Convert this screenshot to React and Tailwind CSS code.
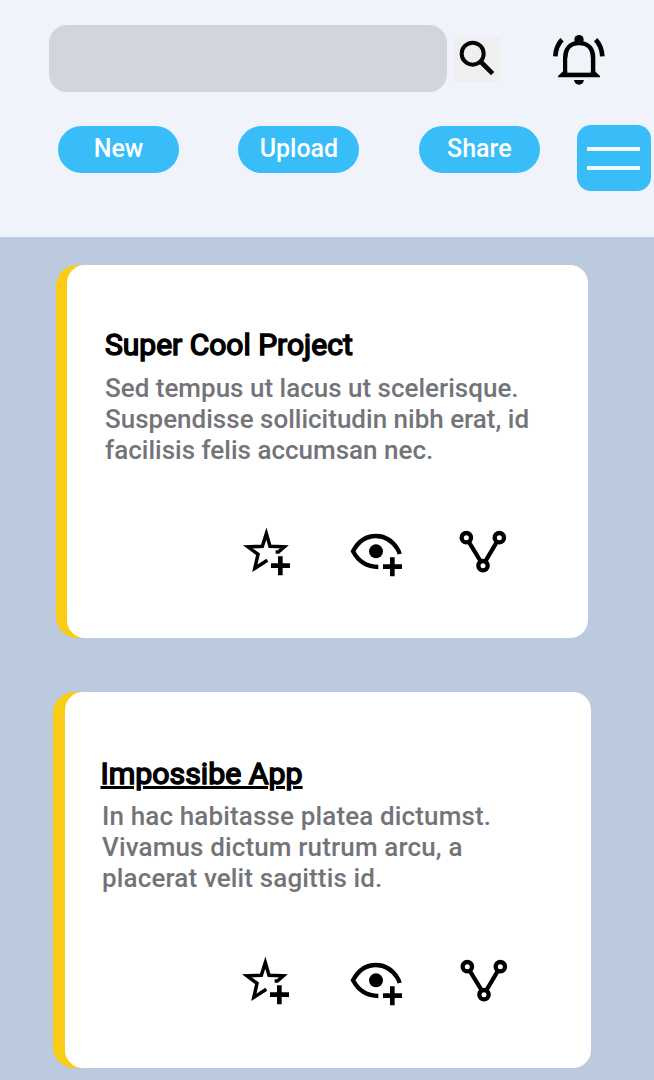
import React from "react";

function SearchIcon() {
  return (
    <svg viewBox="42 66 138 135" className="h-[45px] w-[46px]" fill="none" stroke="#050505" strokeWidth="12">
      <circle cx="98" cy="116" r="33" />
      <path d="M120 138L158 176" strokeWidth="14" />
    </svg>
  );
}

function BellIcon() {
  return (
    <svg viewBox="333 54 168 162" className="h-[54px] w-[56px]" fill="none" stroke="#000" strokeWidth="14">
      <path d="M376 178V128C376 101 391 84 417 84C443 84 459 101 459 128V178" />
      <path d="M354 187V183L370 168H464L480 183V187Z" fill="#000" stroke="none" />
      <path d="M382 173V128H452V173Z" fill="#f0f4fa" stroke="none" />
      <circle cx="417" cy="74" r="14" fill="#000" stroke="none" />
      <path d="M402 195H432C430 204 425 209 417 209C409 209 404 204 402 195Z" fill="#000" stroke="none" />
      <path d="M346 124C347 103 353 88 366 74M487 124C486 103 480 88 467 74" strokeWidth="14" />
    </svg>
  );
}

function StarPlusIcon() {
  return (
    <svg viewBox="36 36 150 150" className="size-[50px]" fill="none" stroke="#000" strokeWidth="10.5" strokeMiterlimit="10">
      <path d="M137 111H145L163 95.500L120 94L109 56L97 94L54 95.500L84 118L74.500 160L112 136" />
      <path d="M123 152H180M151 124V181" strokeWidth="14" />
    </svg>
  );
}

function EyePlusIcon() {
  return (
    <svg viewBox="354 42 168 150" className="h-[50px] w-[56px]" fill="none" stroke="#000" strokeWidth="13">
      <path d="M509 117Q507 108 502 101C485 75 462 63 438 63C408 63 384 80 369 109C385 139 408 156 445 156" />
      <circle cx="438" cy="109" r="21" fill="#000" stroke="none" />
      <path d="M459 155H516M487 127V184" strokeWidth="14" />
    </svg>
  );
}

function ForkIcon() {
  return (
    <svg viewBox="684 36 150 150" className="size-[50px]" fill="none" stroke="#000" strokeWidth="13">
      <circle cx="709" cy="68" r="14" />
      <circle cx="808" cy="68" r="14" />
      <circle cx="759" cy="152" r="14" />
      <path d="M716 80L752 139M801 80L766 139" strokeWidth="12.5" />
    </svg>
  );
}

function PillButton({ children }) {
  return (
    <button className="h-[47px] w-[121px] rounded-full bg-[#38bdf9] text-center text-[25px] leading-[46px] font-medium text-white">
      {children}
    </button>
  );
}

function Header() {
  return (
    <header className="h-[237px] bg-[#f0f4fa] pt-[25px]">
      <div className="flex h-[67px] items-start pl-[49px]">
        <div className="h-[67px] w-[398px] rounded-[18px] bg-[#d1d5de]" />
        <button className="mt-[12px] ml-[7px] bg-[#efefef]"><SearchIcon /></button>
        <button className="mt-[8px] ml-[51px]"><BellIcon /></button>
      </div>
      <div className="mt-[33px] flex items-start pl-[58px]">
        <div className="mt-[0.5px] flex gap-[59.4px]">
          <PillButton>New</PillButton>
          <PillButton>Upload</PillButton>
          <PillButton>Share</PillButton>
        </div>
        <button className="ml-[37px] flex h-[66px] w-[74px] flex-col items-center gap-[15px] rounded-[14px] bg-[#38bdf9] pt-[22px]">
          <span className="h-[4px] w-[53px] bg-[#f0f7fe]" />
          <span className="h-[4px] w-[53px] bg-[#f0f7fe]" />
        </button>
      </div>
    </header>
  );
}

export default function App() {
  return (
    <div className="h-[1080px] w-[654px] overflow-hidden bg-[#bbcadf] [font-family:Roboto,sans-serif]">
      <Header />
      <main>
        <article className="mt-[28px] ml-[56px] h-[373px] w-[532px] rounded-l-[21px] rounded-r-[28px] bg-[#facc15] pl-[11px]">
          <div className="h-full rounded-[18px] bg-white pt-[62px] pl-[38px]">
            <h2 className="h-[46px] text-[30px] leading-[36px] whitespace-nowrap text-black [-webkit-text-stroke:1.5px_#000]">Super Cool Project</h2>
            <p className="text-[26px] leading-[31px] font-medium whitespace-nowrap text-[#737479]">
              Sed tempus ut lacus ut scelerisque.<br />
              Suspendisse sollicitudin nibh erat, id<br />
              facilisis felis accumsan nec.
            </p>
            <div className="mt-[61px] flex pl-[137px]">
              <StarPlusIcon />
              <div className="ml-[56px] mt-[2px]"><EyePlusIcon /></div>
              <div className="ml-[54px]"><ForkIcon /></div>
            </div>
          </div>
        </article>
        <article className="mt-[54px] ml-[53px] h-[376px] w-[538px] rounded-l-[21px] rounded-r-[28px] bg-[#facc15] pl-[11.500px]">
          <div className="h-full rounded-[18px] bg-white pt-[64px] pl-[36px]">
            <h2 className="h-[45px] text-[30.3px] leading-[36px] whitespace-nowrap text-black underline [-webkit-text-stroke:1.5px_#000]">Impossibe App</h2>
            <p className="pl-[1.5px] text-[26px] leading-[31px] font-medium tracking-[0.14px] whitespace-nowrap text-[#737479]">
              In hac habitasse platea dictumst.<br />
              Vivamus dictum rutrum arcu, a<br />
              placerat velit sagittis id.
            </p>
            <div className="mt-[62px] flex pl-[140px]">
              <StarPlusIcon />
              <div className="ml-[57.500px] mt-[2px]"><EyePlusIcon /></div>
              <div className="ml-[55px]"><ForkIcon /></div>
            </div>
          </div>
        </article>
      </main>
    </div>
  );
}
